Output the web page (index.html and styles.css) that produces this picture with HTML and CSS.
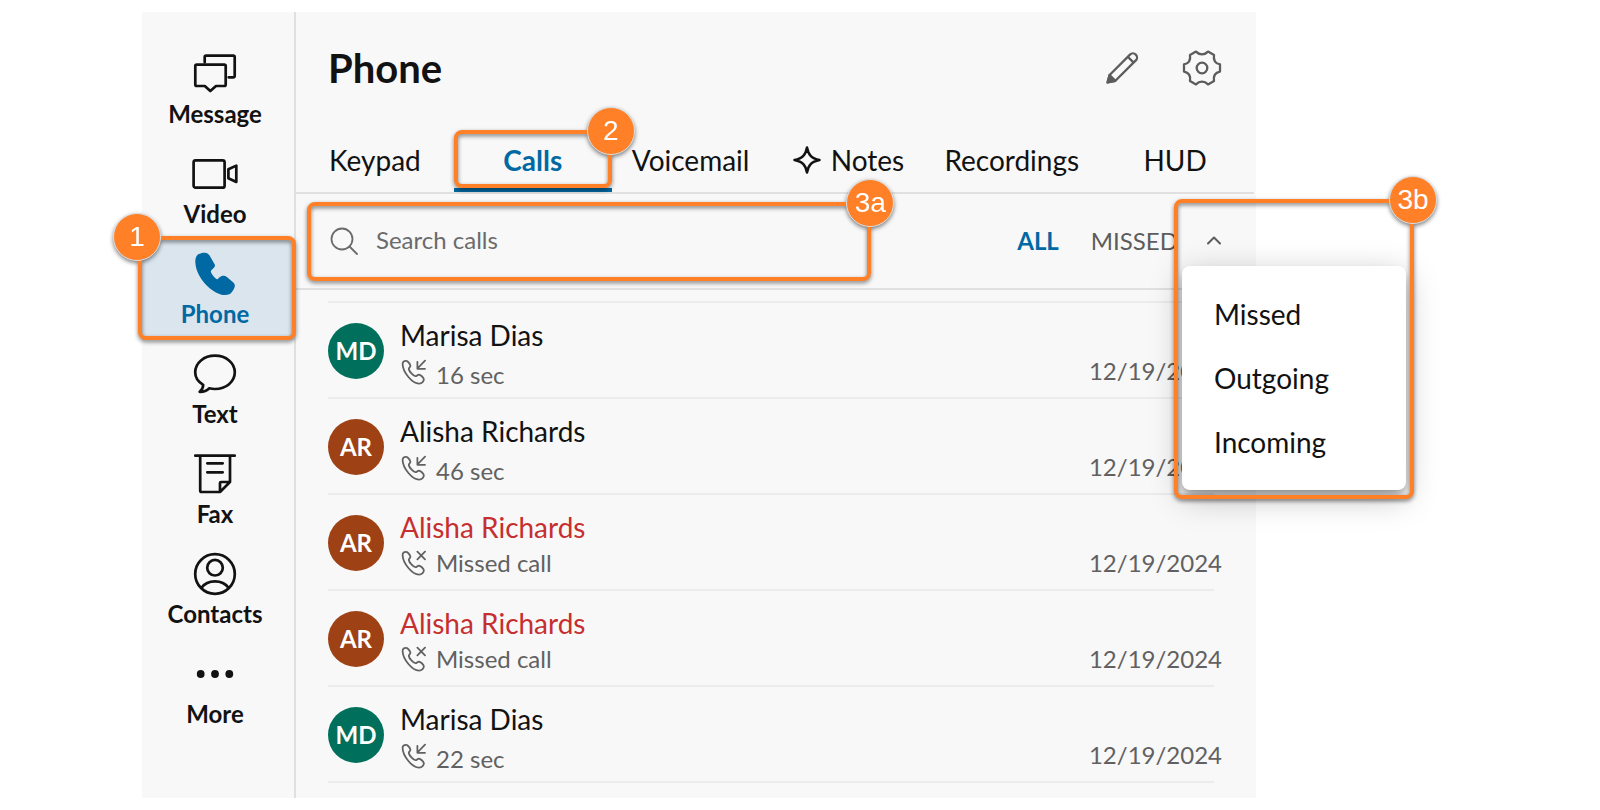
FILE: index.html
```html
<!DOCTYPE html>
<html lang="en">
<head>
    <meta charset="UTF-8">
    <meta name="viewport" content="width=device-width, initial-scale=1.0">
    <title>Phone - Calls</title>
    <link rel="stylesheet" href="styles.css">
</head>
<body>

<!-- Shared icons for the call list -->
<svg class="sprite" aria-hidden="true">
    <symbol id="icon-incoming" viewBox="0 0 26 26">
        <path d="M2.6 5C2.5 2.9 4.3 1.6 6.3 1.8C7.8 1.9 10 4.8 10.4 6.6C10.6 8 8.6 8.6 8.8 10C9.2 12.4 13.2 17 15.4 17.2C16.8 17.3 17.4 15.6 18.9 15.6C20.6 15.7 23.4 18.4 23.8 20C24.2 22 21.8 24.5 19.2 24.6C12.4 24.8 2.8 13.4 2.6 5Z"/>
        <path d="M25 1.6L17.5 9.5M17.4 2.8V9.8H25"/>
    </symbol>
    <symbol id="icon-missed" viewBox="0 0 26 26">
        <path d="M2.6 5C2.5 2.9 4.3 1.6 6.3 1.8C7.8 1.9 10 4.8 10.4 6.6C10.6 8 8.6 8.6 8.8 10C9.2 12.4 13.2 17 15.4 17.2C16.8 17.3 17.4 15.6 18.9 15.6C20.6 15.7 23.4 18.4 23.8 20C24.2 22 21.8 24.5 19.2 24.6C12.4 24.8 2.8 13.4 2.6 5Z"/>
        <path d="M17.4 1.7L25 9.3M25 1.7L17.4 9.3"/>
    </symbol>
</svg>

<div class="app">
    <nav class="sidebar">
        <a class="nav-item" href="#message">
            <svg viewBox="0 0 48 48"><path d="M13.7 12.3V7.2Q13.7 5.7 15.2 5.7H42.2Q43.7 5.7 43.7 7.2V25.8Q43.7 27.3 42.2 27.3H37.7"/><path d="M5.8 14.7H33.2Q34.7 14.7 34.7 16.2V34.5Q34.7 36 33.2 36H25L19.3 41L13.8 36H5.8Q4.3 36 4.3 34.5V16.2Q4.3 14.7 5.8 14.7Z"/></svg>
            <span>Message</span>
        </a>
        <a class="nav-item" href="#video">
            <svg viewBox="0 0 48 48"><rect x="2.6" y="10.3" width="31" height="27.4" rx="2"/><path d="M37.4 19.3L45.3 15.6V32L37.4 28.3Z"/></svg>
            <span>Video</span>
        </a>
        <a class="nav-item active" href="#phone">
            <svg class="solid" viewBox="0 0 48 48"><path d="M4.3 11C4.5 8 5.2 5.8 7.3 4.3C9.8 2.7 13 2.4 15.3 2.9C17.2 3.3 18.1 4.8 19 6.3L23.6 14.2C24.3 15.5 24 16.6 23.1 17.5L20.6 20C19.7 20.9 19.6 21.7 20.3 22.9C21.6 25.3 23.3 27.4 25.4 29.1C26.4 29.3 27 28.7 27.7 27.9C29.3 26.3 31.1 25.7 33 25.7C34.4 25.8 35.2 26.3 36.2 27.2L42.3 32.6C43.9 34.1 44.2 35.9 43.4 37.8C42.3 40.4 40.5 43.3 38.3 44.2C35.9 45.2 32.3 45.1 29.7 44.4C16.9 40.6 4.1 25 4.3 11Z"/></svg>
            <span>Phone</span>
            <div class="callout"><b class="badge badge-left">1</b></div>
        </a>
        <a class="nav-item" href="#text">
            <svg viewBox="0 0 48 48"><path d="M12.2 34.8C7 31.8 4.2 27.4 4.2 22.3C4.2 12.8 13 5.7 24 5.7S43.8 12.8 43.8 22.3S35 39 24 39C22 39 20.1 38.8 18.3 38.3C16 40.6 12.6 42 8.7 41.9C11 40 12.2 37.6 12.2 34.8Z"/></svg>
            <span>Text</span>
        </a>
        <a class="nav-item" href="#fax">
            <svg viewBox="0 0 48 48"><path d="M4.3 5.7H43.7M9.2 5.7V40.5Q9.2 42 10.7 42H29L39 32V5.7M29 42V33Q29 32 30 32H39M16.3 13.3H31.7M16.3 22.3H31.7"/></svg>
            <span>Fax</span>
        </a>
        <a class="nav-item" href="#contacts">
            <svg viewBox="0 0 48 48"><circle cx="24" cy="24" r="19.8"/><circle cx="24" cy="17.7" r="7.8"/><path d="M10.7 37.5C13.5 33.5 18 31.3 24 31.3S34.5 33.5 37.3 37.5"/></svg>
            <span>Contacts</span>
        </a>
        <a class="nav-item" href="#more">
            <svg class="solid" viewBox="0 0 48 48"><circle cx="9.7" cy="24" r="3.9"/><circle cx="24" cy="24" r="3.9"/><circle cx="38.3" cy="24" r="3.9"/></svg>
            <span>More</span>
        </a>
    </nav>

    <main class="main">
        <header class="header">
            <h1>Phone</h1>
            <div class="header-actions">
                <button type="button" aria-label="Edit">
                    <svg viewBox="0 0 48 48"><path d="M11.6 31L32 10.6A4 4 0 0 1 37.8 16.4L17.4 36.8L9.6 38.4ZM29.8 12.8L35.6 18.6"/><path class="tip" d="M11.6 31L17.4 36.8L9.6 38.4Z"/></svg>
                </button>
                <button type="button" aria-label="Settings">
                    <svg viewBox="0 0 48 48"><path d="M30 7.6L36 11C35.2 16.4 37.6 19.6 42 20.4V27.6C37.6 28.4 35.2 31.6 36 37L30 40.4C26.4 36.6 21.6 36.6 18 40.4L12 37C12.8 31.6 10.4 28.4 6 27.6V20.4C10.4 19.6 12.8 16.4 12 11L18 7.6C21.6 11.4 26.4 11.4 30 7.6Z"/><circle cx="24" cy="24" r="5.3"/></svg>
                </button>
            </div>
        </header>

        <div class="tabs">
            <button type="button" class="tab">Keypad</button>
            <button type="button" class="tab active">Calls
                <span class="callout"><b class="badge">2</b></span>
            </button>
            <button type="button" class="tab">Voicemail</button>
            <button type="button" class="tab">
                <svg viewBox="0 0 28 28"><path d="M14 1.5C15.4 8.8 18.2 12.2 26.5 14C18.2 15.8 15.4 19.2 14 26.5C12.6 19.2 9.8 15.8 1.5 14C9.8 12.2 12.6 8.8 14 1.5Z"/></svg>
                Notes
            </button>
            <button type="button" class="tab">Recordings</button>
            <button type="button" class="tab">HUD</button>
        </div>

        <div class="toolbar">
            <div class="search">
                <label for="search" aria-label="Search calls">
                    <svg viewBox="0 0 28 28"><circle cx="12" cy="12" r="10.5"/><path d="M19.5 19.5L27 27"/></svg>
                </label>
                <input type="text" id="search" placeholder="Search calls">
                <div class="callout"><b class="badge">3a</b></div>
            </div>
            <div class="filters">
                <button type="button" class="active">ALL</button>
                <button type="button">MISSED</button>
                <div class="dropdown">
                    <button type="button" class="toggle" aria-label="Filter calls">
                        <svg viewBox="0 0 24 24"><path d="M6 14.5L12 8.5L18 14.5"/></svg>
                    </button>
                    <div class="menu">
                        <button type="button">Missed</button>
                        <button type="button">Outgoing</button>
                        <button type="button">Incoming</button>
                    </div>
                    <div class="callout"><b class="badge">3b</b></div>
                </div>
            </div>
        </div>

        <ul class="calls">
            <li class="call">
                <div class="avatar green">MD</div>
                <div class="info">
                    <div class="name">Marisa Dias</div>
                    <div class="status duration"><svg><use href="#icon-incoming"/></svg><span>16 sec</span></div>
                </div>
                <div class="date">12/19/2024</div>
            </li>
            <li class="call">
                <div class="avatar brown">AR</div>
                <div class="info">
                    <div class="name">Alisha Richards</div>
                    <div class="status duration"><svg><use href="#icon-incoming"/></svg><span>46 sec</span></div>
                </div>
                <div class="date">12/19/2024</div>
            </li>
            <li class="call missed">
                <div class="avatar brown">AR</div>
                <div class="info">
                    <div class="name">Alisha Richards</div>
                    <div class="status"><svg><use href="#icon-missed"/></svg><span>Missed call</span></div>
                </div>
                <div class="date">12/19/2024</div>
            </li>
            <li class="call missed">
                <div class="avatar brown">AR</div>
                <div class="info">
                    <div class="name">Alisha Richards</div>
                    <div class="status"><svg><use href="#icon-missed"/></svg><span>Missed call</span></div>
                </div>
                <div class="date">12/19/2024</div>
            </li>
            <li class="call">
                <div class="avatar green">MD</div>
                <div class="info">
                    <div class="name">Marisa Dias</div>
                    <div class="status duration"><svg><use href="#icon-incoming"/></svg><span>22 sec</span></div>
                </div>
                <div class="date">12/19/2024</div>
            </li>
        </ul>
    </main>
</div>

</body>
</html>
```

FILE: styles.css
```css
* {
    box-sizing: border-box;
}

body {
    margin: 0;
    padding: 12px 344px 12px 142px;
    background-color: #ffffff;
    color: #121212;
    font-family: Lato, sans-serif;
    font-size: 24px;
}

button,
input {
    padding: 0;
    border: none;
    background: none;
    color: inherit;
    font: inherit;
}

button {
    cursor: pointer;
}

svg {
    display: block;
    flex-shrink: 0;
    fill: none;
    stroke: currentColor;
    stroke-width: 2;
    stroke-linecap: round;
    stroke-linejoin: round;
}

.sprite {
    display: none;
}

.app {
    display: flex;
    background-color: #f8f8f8;
}

/* Sidebar */
.sidebar {
    flex: 0 0 154px;
    padding-top: 28px;
    border-right: 2px solid #e0e0e0;
}

.nav-item {
    position: relative;
    display: flex;
    flex-direction: column;
    align-items: center;
    height: 100px;
    padding: 10px 6px 0 0;
    color: #121212;
    font-weight: bold;
    line-height: 32px;
    text-decoration: none;
}

.nav-item svg {
    width: 48px;
    height: 48px;
    stroke-width: 2.7;
}

.nav-item .solid {
    fill: currentColor;
    stroke: none;
}

.nav-item.active {
    background-color: #dbe5ee;
    color: #0069a3;
}

/* Numbered highlight boxes */
.callout {
    position: absolute;
    border: 4px solid #ff8026;
    border-radius: 8px;
    filter: drop-shadow(0 2px 2px rgba(0, 0, 0, 0.5));
    pointer-events: none;
}

.badge {
    position: absolute;
    top: -27px;
    right: -27px;
    width: 48px;
    height: 48px;
    border: 1px solid #dddddd;
    border-radius: 50%;
    background-color: #ff8026;
    color: #ffffff;
    font-family: "Liberation Sans", Arial, sans-serif;
    font-size: 28px;
    font-weight: normal;
    line-height: 46px;
    text-align: center;
}

.badge-left {
    right: auto;
    left: -29px;
}

.nav-item .callout {
    inset: -4px -2px 0 -4px;
    z-index: 1;
}

.tab .callout {
    inset: 6px 0 0 0;
}

.search .callout {
    inset: 8px 0 7px 11px;
}

.dropdown .callout {
    top: -30px;
    right: -188px;
    left: -28px;
    height: 300px;
}

/* Header */
.main {
    flex: 1;
    min-width: 0;
    padding-bottom: 15px;
}

.header {
    display: flex;
    justify-content: space-between;
    padding: 32px;
    padding-right: 30px;
}

.header h1 {
    margin: 0;
    font-size: 40px;
    line-height: 48px;
}

.header-actions {
    display: flex;
    gap: 32px;
    color: #5c5c5c;
}

.header-actions svg {
    width: 48px;
    height: 48px;
    stroke-width: 2.3;
}

.header-actions .tip {
    fill: currentColor;
}

/* Tabs */
.tabs {
    display: flex;
    margin-right: 2px;
    border-bottom: 2px solid #e0e0e0;
}

.tab {
    position: relative;
    display: flex;
    flex: 1 1 0;
    justify-content: center;
    align-items: center;
    gap: 10px;
    height: 68px;
    padding: 8px 17px 0;
    border-bottom: 4px solid transparent;
    font-size: 28px;
}

.tab svg {
    width: 28px;
    height: 28px;
    stroke-width: 2.5;
}

.tab.active {
    border-color: #0069a3;
    color: #0069a3;
    font-weight: bold;
}

/* Search and filters */
.toolbar {
    display: flex;
    height: 96px;
    border-bottom: 2px solid #e0e0e0;
}

.search {
    position: relative;
    display: flex;
    flex: 1;
    align-items: center;
    gap: 18px;
    margin-right: 146px;
    padding-left: 34px;
}

.search svg {
    width: 28px;
    height: 28px;
    color: #6b6b6b;
    stroke-width: 1.8;
}

.search input {
    flex: 1;
    min-width: 0;
    height: 48px;
    margin-right: 20px;
    padding-bottom: 3px;
    outline: none;
}

.search input::placeholder {
    color: #6b6b6b;
    opacity: 1;
}

.filters {
    display: flex;
    align-items: center;
    gap: 32px;
    padding-right: 30px;
    color: #5c5c5c;
}

.filters button {
    padding-bottom: 2px;
}

.filters .active {
    color: #0069a3;
    font-weight: bold;
}

.dropdown {
    position: relative;
    margin-left: -8px;
}

.filters .toggle {
    display: block;
    padding: 0;
}

.toggle svg {
    width: 24px;
    height: 24px;
}

.menu {
    position: absolute;
    top: 37px;
    right: -180px;
    width: 224px;
    padding: 16px 0;
    border-radius: 8px;
    background-color: #ffffff;
    box-shadow: 0 6px 10px -2px rgba(0, 0, 0, 0.35), 0 8px 32px rgba(0, 0, 0, 0.25);
    color: #121212;
}

.filters .menu button {
    display: block;
    width: 100%;
    padding: 0 0 0 32px;
    font-size: 28px;
    line-height: 64px;
    text-align: left;
}

/* Call list */
.calls {
    margin: 11px 42px 0 32px;
    padding: 0;
    border-top: 2px solid #ebebeb;
    list-style: none;
}

.call {
    display: flex;
    height: 96px;
    padding-top: 15px;
    border-bottom: 2px solid #ebebeb;
}

.avatar {
    width: 56px;
    height: 56px;
    margin: 5px 16px 0 0;
    border-radius: 50%;
    color: #ffffff;
    font-weight: bold;
    line-height: 56px;
    text-align: center;
}

.green {
    background-color: #00705c;
}

.brown {
    background-color: #9e4115;
}

.info {
    flex: 1;
}

.name {
    margin-bottom: 5px;
    font-size: 28px;
    line-height: 34px;
}

.missed .name {
    color: #c62f2f;
}

.status {
    display: flex;
    align-items: center;
    gap: 10px;
    color: #616161;
    line-height: 28px;
}

.status svg {
    width: 26px;
    height: 26px;
    stroke-width: 1.8;
}

.duration {
    align-items: flex-start;
    padding-top: 2px;
    line-height: 32px;
}

.date {
    margin: 39px -8px 0 0;
    color: #616161;
    line-height: 28px;
}
```
